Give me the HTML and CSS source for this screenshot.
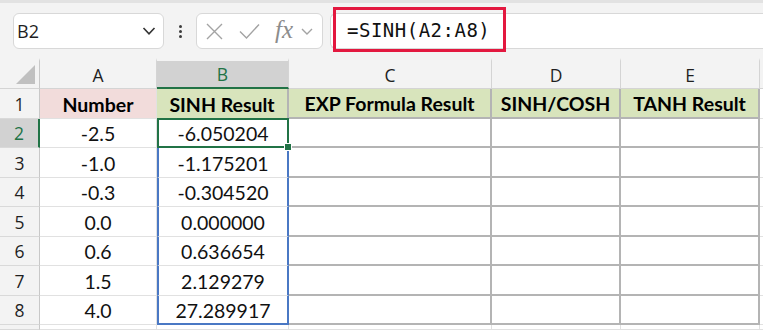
FILE: index.html
```html
<!DOCTYPE html>
<html lang="en">
<head>
    <meta charset="UTF-8">
    <meta name="viewport" content="width=device-width, initial-scale=1.0">
    <title>SINH in Excel</title>
    <link rel="stylesheet" href="styles.css">
</head>
<body>
    <div class="toolbar">
        <div class="namebox">
            <span class="ref">B2</span>
            <svg class="chev" width="14" height="8" viewBox="0 0 14 8"><path d="M1.5 1l5.5 5.8L12.5 1" fill="none" stroke="#333" stroke-width="1.6"/></svg>
        </div>
        <div class="dots"><span></span><span></span><span></span></div>
        <div class="fxbox">
            <svg class="ic-x" width="17" height="17" viewBox="0 0 17 17"><path d="M1 1l15 15M16 1L1 16" stroke="#a3a3a3" stroke-width="1.4"/></svg>
            <svg class="ic-ok" width="21" height="16" viewBox="0 0 21 16"><path d="M1 8.5l6.5 6.5L20 1.5" fill="none" stroke="#a3a3a3" stroke-width="1.4"/></svg>
            <span class="fx">fx</span>
            <svg class="ic-chev" width="12" height="7" viewBox="0 0 12 7"><path d="M1 1l5 5 5-5" fill="none" stroke="#a3a3a3" stroke-width="1.4"/></svg>
        </div>
        <div class="formula">
            <div class="formula-mark">=SINH(A2:A8)</div>
        </div>
    </div>

    <div class="sheet">
        <div class="h corner"><span class="tri"></span></div>
        <div class="h">A</div>
        <div class="h active-col">B</div>
        <div class="h">C</div>
        <div class="h">D</div>
        <div class="h">E</div>
        <div class="h edge"></div>

        <div class="rh">1</div>
        <div class="c title pink">Number</div>
        <div class="c title green bx-l">SINH Result</div>
        <div class="c title green bx">EXP Formula Result</div>
        <div class="c title green bx">SINH/COSH</div>
        <div class="c title green bx">TANH Result</div>
        <div class="c edge"></div>

        <div class="rh active-row">2</div>
        <div class="c">-2.5</div>
        <div class="c rng active">-6.050204<span class="handle"></span></div>
        <div class="c bx"></div>
        <div class="c bx"></div>
        <div class="c bx"></div>
        <div class="c edge"></div>

        <div class="rh">3</div>
        <div class="c">-1.0</div>
        <div class="c rng">-1.175201</div>
        <div class="c bx"></div>
        <div class="c bx"></div>
        <div class="c bx"></div>
        <div class="c edge"></div>

        <div class="rh">4</div>
        <div class="c">-0.3</div>
        <div class="c rng">-0.304520</div>
        <div class="c bx"></div>
        <div class="c bx"></div>
        <div class="c bx"></div>
        <div class="c edge"></div>

        <div class="rh">5</div>
        <div class="c">0.0</div>
        <div class="c rng">0.000000</div>
        <div class="c bx"></div>
        <div class="c bx"></div>
        <div class="c bx"></div>
        <div class="c edge"></div>

        <div class="rh">6</div>
        <div class="c">0.6</div>
        <div class="c rng">0.636654</div>
        <div class="c bx"></div>
        <div class="c bx"></div>
        <div class="c bx"></div>
        <div class="c edge"></div>

        <div class="rh">7</div>
        <div class="c">1.5</div>
        <div class="c rng">2.129279</div>
        <div class="c bx"></div>
        <div class="c bx"></div>
        <div class="c bx"></div>
        <div class="c edge"></div>

        <div class="rh">8</div>
        <div class="c">4.0</div>
        <div class="c rng last">27.289917</div>
        <div class="c bx"></div>
        <div class="c bx"></div>
        <div class="c bx"></div>
        <div class="c edge"></div>

        <div class="rh"></div>
        <div class="c"></div>
        <div class="c"></div>
        <div class="c"></div>
        <div class="c"></div>
        <div class="c"></div>
        <div class="c edge"></div>
    </div>
</body>
</html>
```

FILE: styles.css
```css
body {
    margin: 0;
    width: 763px;
    height: 330px;
    overflow: hidden;
    background: #fff;
    font-family: 'Open Sans', sans-serif;
}
.toolbar {
    height: 58px;
    box-sizing: border-box;
    background: #f3f3f3;
    border-top: 3px solid #e2e2e2;
    padding-top: 10px;
    display: flex;
    align-items: flex-start;
}
.namebox {
    width: 151px;
    height: 36px;
    margin-left: 13px;
    box-sizing: border-box;
    background: #fff;
    border: 1px solid #d8d8d8;
    border-radius: 6px;
    display: flex;
    align-items: center;
    justify-content: space-between;
    padding: 0 7px 0 3px;
}
.ref {
    font-size: 18px;
    color: #1f1f1f;
}
.dots {
    width: 32px;
    height: 36px;
    display: flex;
    flex-direction: column;
    align-items: center;
    justify-content: center;
    gap: 2px;
}
.dots span {
    width: 3px;
    height: 3px;
    background: #3c3c3c;
    border-radius: 50%;
}
.fxbox {
    width: 127px;
    height: 36px;
    box-sizing: border-box;
    background: #fff;
    border: 1px solid #d8d8d8;
    border-radius: 6px;
    display: flex;
    align-items: center;
    padding-left: 9px;
}
.ic-ok {
    margin-left: 16px;
}
.fx {
    margin-left: 15px;
    font-family: 'Liberation Serif', serif;
    font-style: italic;
    font-size: 25px;
    color: #8c8c8c;
    line-height: 1;
    margin-top: -3px;
}
.ic-chev {
    margin-left: 8px;
}
.formula {
    flex: 1;
    height: 36px;
    margin-left: 7px;
    box-sizing: border-box;
    background: #fff;
    border: 1px solid #d8d8d8;
    border-right: none;
    border-radius: 6px 0 0 6px;
    display: flex;
    align-items: center;
}
.formula-mark {
    width: 173px;
    height: 45px;
    margin-left: 2px;
    margin-bottom: 3px;
    box-sizing: border-box;
    border: 3px solid #e3183f;
    padding-left: 11px;
    display: flex;
    align-items: center;
    font-family: 'DejaVu Sans Mono', monospace;
    font-size: 19px;
    letter-spacing: 0.5px;
    color: #111;
}

.sheet {
    height: 272px;
    display: grid;
    grid-template-columns: 40px 117px 132px 203px 129px 139px 1fr;
    grid-template-rows: 31px 30px 29px 30px 29px 30px 29px 30px 29px 1fr;
    font-family: 'Lato', sans-serif;
    font-size: 19.5px;
    color: #111;
    background: #fff;
}
.h {
    background: #f3f3f3;
    border-right: 1px solid #d4d4d4;
    border-bottom: 1px solid #d4d4d4;
    border-top: 3px solid #f3f3f3;
    font-family: 'Open Sans', sans-serif;
    font-size: 17.5px;
    color: #1f1f1f;
    display: flex;
    align-items: center;
    justify-content: center;
    box-sizing: border-box;
}
.corner {
    position: relative;
    border-right-color: #c8c8c8;
}
.tri {
    position: absolute;
    right: 4px;
    bottom: 4px;
    width: 0;
    height: 0;
    border-left: 19px solid transparent;
    border-bottom: 19px solid #c0c0c0;
}
.active-col {
    background: #d2d2d2;
    border-top-color: #f3f3f3;
    border-bottom: 2px solid #217346;
    color: #217346;
}
.h.edge {
    border-right: none;
}
.rh {
    background: #f3f3f3;
    border-right: 1px solid #c8c8c8;
    border-bottom: 1px solid #d9d9d9;
    font-family: 'Open Sans', sans-serif;
    font-size: 17.5px;
    color: #1f1f1f;
    display: flex;
    align-items: center;
    justify-content: center;
    box-sizing: border-box;
}
.active-row {
    background: #d2d2d2;
    border-right: 2px solid #217346;
    color: #217346;
}
.c {
    border-right: 1px solid #e1e1e1;
    border-bottom: 1px solid #e1e1e1;
    display: flex;
    align-items: center;
    justify-content: center;
    box-sizing: border-box;
    white-space: nowrap;
    padding-top: 1px;
}
.c.edge {
    border-right: none;
}
.title {
    font-weight: bold;
    color: #000;
}
.pink {
    background: #f2dcdb;
}
.green {
    background: #d8e4bc;
}
.bx {
    border-right: 2px solid #b4b4b4;
    border-bottom: 2px solid #b4b4b4;
}
.bx-l {
    border-right: 2px solid #b4b4b4;
}
.rng {
    border-left: 2px solid #4a78c4;
    border-right: 2px solid #4a78c4;
    border-bottom: 1px solid #e1e1e1;
}
.rng.last {
    border-bottom: 2px solid #4a78c4;
}
.active {
    position: relative;
    border: 2px solid #217346;
    margin-top: -1px;
}
.handle {
    position: absolute;
    right: -5px;
    bottom: -5px;
    width: 6px;
    height: 6px;
    background: #217346;
    border: 1px solid #fff;
}
```
